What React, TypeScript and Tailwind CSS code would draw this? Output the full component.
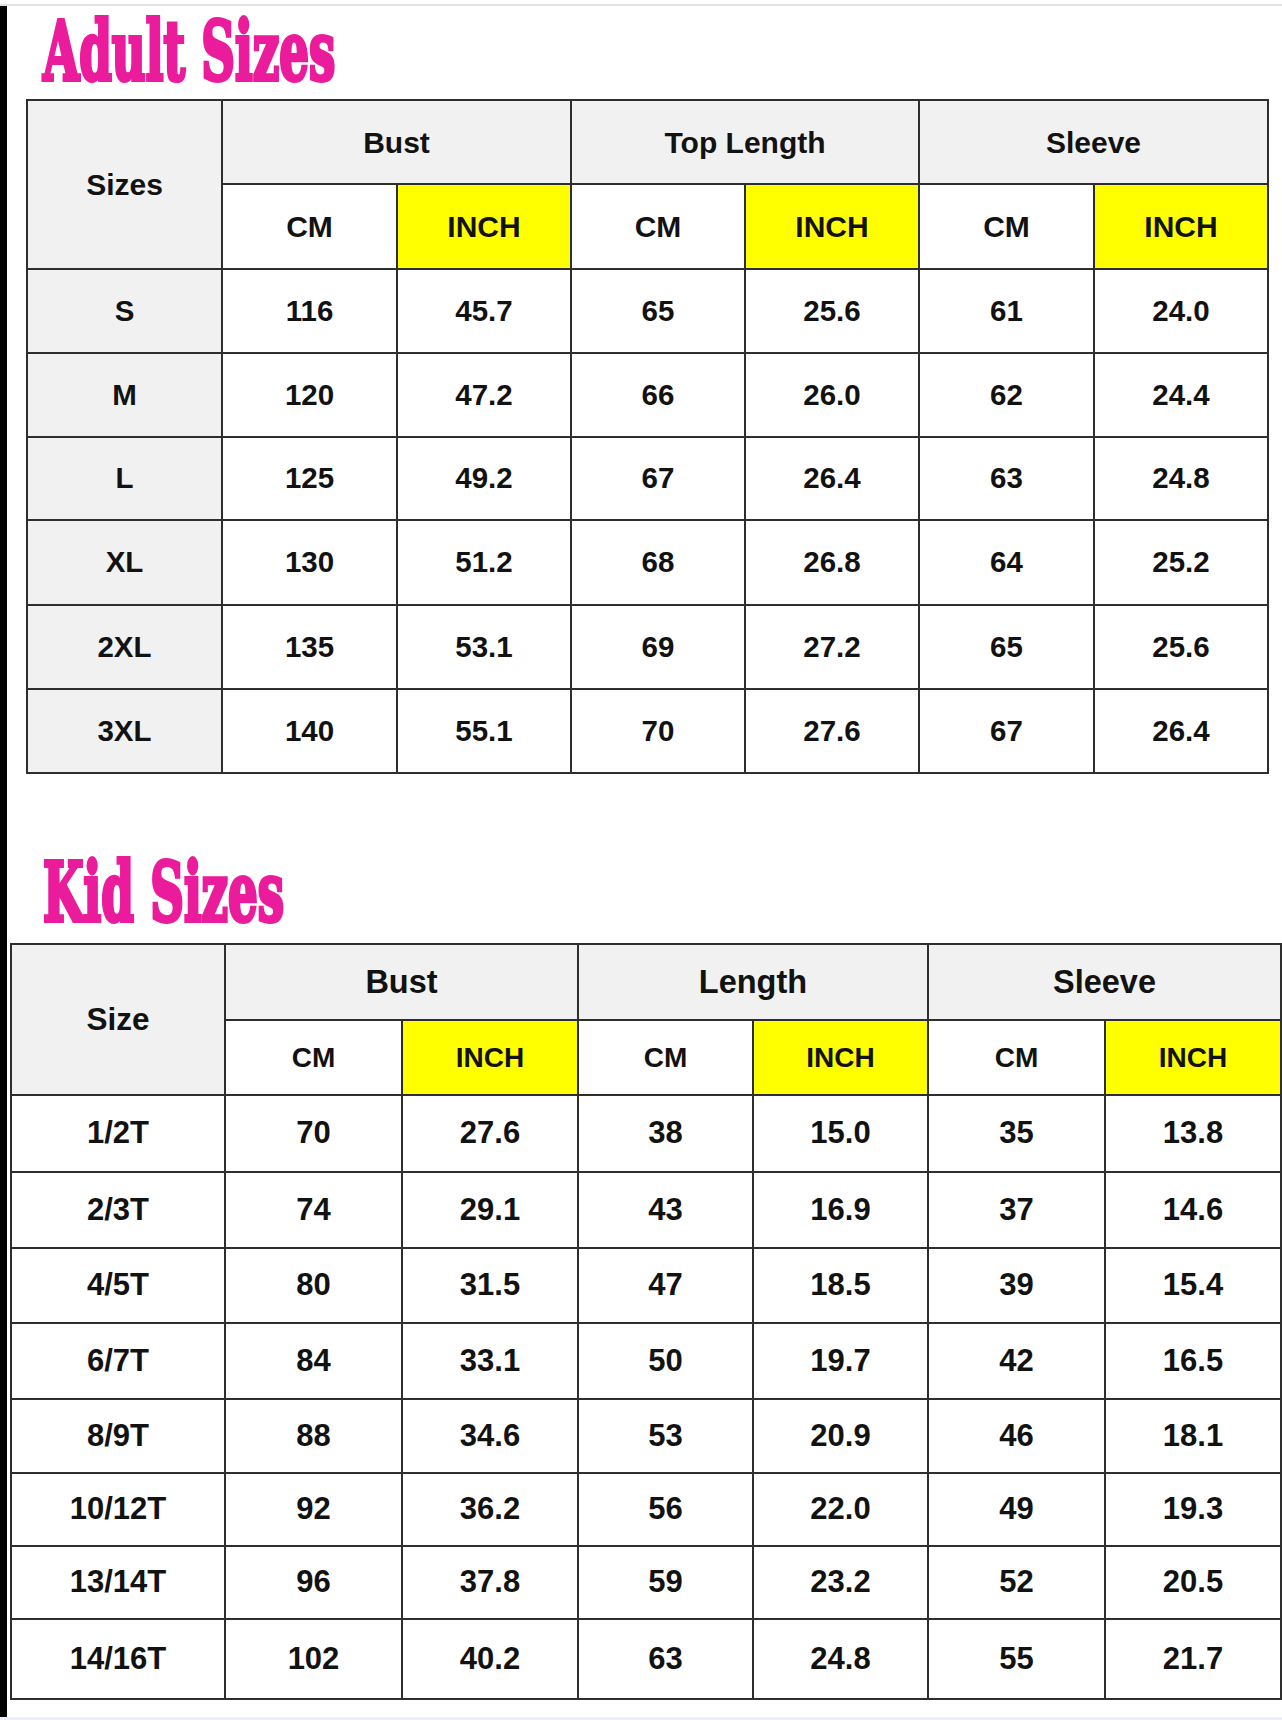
import React from "react";

const adultRows = [
  ["S", "116", "45.7", "65", "25.6", "61", "24.0"],
  ["M", "120", "47.2", "66", "26.0", "62", "24.4"],
  ["L", "125", "49.2", "67", "26.4", "63", "24.8"],
  ["XL", "130", "51.2", "68", "26.8", "64", "25.2"],
  ["2XL", "135", "53.1", "69", "27.2", "65", "25.6"],
  ["3XL", "140", "55.1", "70", "27.6", "67", "26.4"],
];

const kidRows = [
  ["1/2T", "70", "27.6", "38", "15.0", "35", "13.8"],
  ["2/3T", "74", "29.1", "43", "16.9", "37", "14.6"],
  ["4/5T", "80", "31.5", "47", "18.5", "39", "15.4"],
  ["6/7T", "84", "33.1", "50", "19.7", "42", "16.5"],
  ["8/9T", "88", "34.6", "53", "20.9", "46", "18.1"],
  ["10/12T", "92", "36.2", "56", "22.0", "49", "19.3"],
  ["13/14T", "96", "37.8", "59", "23.2", "52", "20.5"],
  ["14/16T", "102", "40.2", "63", "24.8", "55", "21.7"],
];

const cell = "flex items-center justify-center font-bold text-[#121212]";

function Title({ text }: { text: string }) {
  return (
    <div
      className="inline-block origin-left scale-x-[0.625] whitespace-nowrap font-bold leading-none text-[83px] text-[#eb1c9c] [-webkit-text-stroke:4px_#eb1c9c]"
      style={{ fontFamily: '"DejaVu Serif Condensed", "DejaVu Serif", serif' }}
    >
      {text}
    </div>
  );
}

export default function App() {
  return (
    <div
      className="w-[1282px] h-[1720px] bg-white overflow-hidden"
      style={{ fontFamily: '"Liberation Sans", Arial, sans-serif' }}
    >
      <div className="h-[4px] bg-white" />
      <div className="h-[2px] bg-[#e2e2e2]" />
      <div className="flex h-[1711px]">
        <div className="w-[7px] bg-black" />
        <div className="flex-1 flex flex-col">
          {/* Adult title */}
          <div className="h-[93px] pt-[4px] pl-[36px]">
            <Title text="Adult Sizes" />
          </div>

          {/* Adult table */}
          <div className="ml-[19px] w-[1243px] bg-[#2e2e2e] p-[2px] grid gap-[2px] grid-cols-[193px_173px_172px_172px_172px_173px_172px] grid-rows-[82px_83px_82px_82px_81px_83px_82px_82px]">
            <div className={`${cell} row-span-2 bg-[#f1f1f1] text-[30px]`}>Sizes</div>
            <div className={`${cell} col-span-2 bg-[#f1f1f1] text-[30px]`}>Bust</div>
            <div className={`${cell} col-span-2 bg-[#f1f1f1] text-[30px]`}>Top Length</div>
            <div className={`${cell} col-span-2 bg-[#f1f1f1] text-[30px]`}>Sleeve</div>
            <div className={`${cell} bg-white text-[30px]`}>CM</div>
            <div className={`${cell} bg-[#ffff00] text-[30px]`}>INCH</div>
            <div className={`${cell} bg-white text-[30px]`}>CM</div>
            <div className={`${cell} bg-[#ffff00] text-[30px]`}>INCH</div>
            <div className={`${cell} bg-white text-[30px]`}>CM</div>
            <div className={`${cell} bg-[#ffff00] text-[30px]`}>INCH</div>
            {adultRows.map((row) =>
              row.map((v, i) => (
                <div
                  key={row[0] + i}
                  className={`${cell} text-[29.5px] ${i === 0 ? "bg-[#f1f1f1]" : "bg-white"}`}
                >
                  {v}
                </div>
              ))
            )}
          </div>

          {/* Kid title */}
          <div className="h-[169px] pt-[77px] pl-[36px]">
            <Title text="Kid Sizes" />
          </div>

          {/* Kid table */}
          <div className="ml-[3px] w-[1272px] bg-[#2e2e2e] p-[2px] grid gap-[2px] grid-cols-[212px_175px_174px_173px_173px_175px_174px] grid-rows-[74px_73px_75px_74px_73px_74px_72px_71px_71px_78px]">
            <div className={`${cell} row-span-2 bg-[#f1f1f1] text-[31.5px]`}>Size</div>
            <div className={`${cell} col-span-2 bg-[#f1f1f1] text-[32.5px]`}>Bust</div>
            <div className={`${cell} col-span-2 bg-[#f1f1f1] text-[32.5px]`}>Length</div>
            <div className={`${cell} col-span-2 bg-[#f1f1f1] text-[32.5px]`}>Sleeve</div>
            <div className={`${cell} bg-white text-[28px]`}>CM</div>
            <div className={`${cell} bg-[#ffff00] text-[28px]`}>INCH</div>
            <div className={`${cell} bg-white text-[28px]`}>CM</div>
            <div className={`${cell} bg-[#ffff00] text-[28px]`}>INCH</div>
            <div className={`${cell} bg-white text-[28px]`}>CM</div>
            <div className={`${cell} bg-[#ffff00] text-[28px]`}>INCH</div>
            {kidRows.map((row) =>
              row.map((v, i) => (
                <div key={row[0] + i} className={`${cell} bg-white text-[31px]`}>
                  {v}
                </div>
              ))
            )}
          </div>
        </div>
      </div>
      <div className="h-[3px] bg-[#eeeef8]" />
    </div>
  );
}
